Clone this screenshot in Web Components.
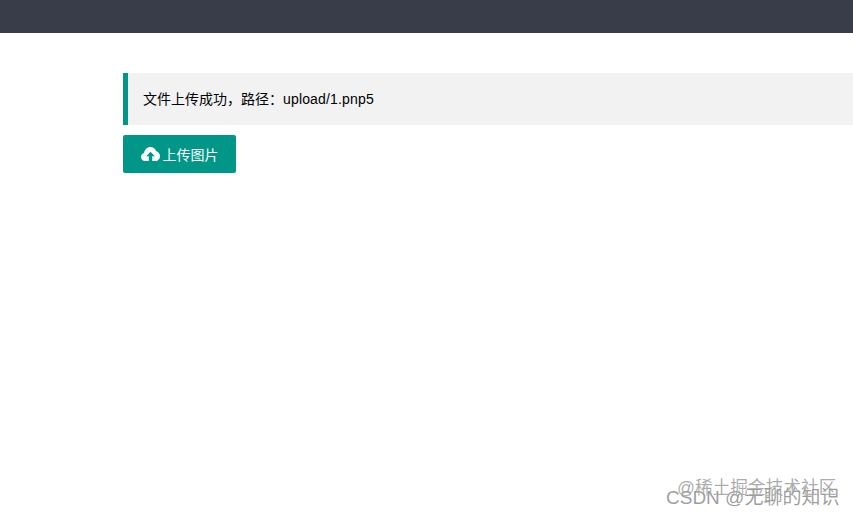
<!DOCTYPE html>
<html lang="zh">
<head>
<meta charset="utf-8">
<title>上传图片</title>
<style>
html,body{margin:0;padding:0;background:#fff;height:100%;overflow:hidden}
body{font:14px "Liberation Sans","Noto Sans CJK SC",sans-serif;color:#000}
</style>
</head>
<body>
<app-shell>
  <top-bar slot="top"></top-bar>
  <quote-box>文件上传成功，路径：<span style="letter-spacing:.16px">upload/1.pnp5</span></quote-box>
  <upload-button>上传图片</upload-button>
  <water-mark slot="overlay"></water-mark>
</app-shell>
<script>
function def(name, html){
  customElements.define(name, class extends HTMLElement{
    constructor(){super();this.attachShadow({mode:'open'}).innerHTML=html;}
  });
}
def('app-shell',`<style>
:host{display:block;position:relative;height:517px;width:853px;overflow:hidden}
main{display:flex;flex-direction:column;align-items:flex-start;gap:10px;padding:40px 0 0 123px}
</style><slot name="top"></slot><main><slot></slot></main><slot name="overlay"></slot>`);
def('top-bar',`<style>:host{display:block;height:33px;background:#393d49}</style>`);
def('quote-box',`<style>
:host{display:block;box-sizing:border-box;width:730px;height:52px;line-height:52px;padding-left:15px;
border-left:5px solid #009688;background:#f2f2f2;font-size:14px;color:#000;white-space:nowrap}
</style><slot></slot>`);
def('upload-button',`<style>
:host{display:inline-flex;align-items:center;justify-content:center;gap:3px;box-sizing:border-box;width:113px;height:38px;
background:#009688;color:#fff;border-radius:2px;font-size:14px;white-space:nowrap}
svg{width:19px;height:14px;display:block;flex:none}
</style><svg viewBox="0 0 19 14" aria-hidden="true"><path fill="#fff" d="M4.2 14C1.9 14 0 12.2 0 9.9c0-2 1.3-3.6 3.1-4C3.6 2.5 6.2 0 9.4 0c2.7 0 5 1.7 5.9 4.2 2.1.4 3.7 2.6 3.7 5 0 2.6-2 4.8-4.6 4.8h-3.2V9.2h2.6L9.5 4.8 5.2 9.2h2.6V14z"/></svg><span><slot></slot></span>`);
def('water-mark',`<style>
:host{display:block;position:absolute;inset:0;pointer-events:none;white-space:nowrap}
div{position:absolute;line-height:20px;text-shadow:0 0 1px #fff}
.a{left:677px;top:478px;font-size:17.7px;color:rgba(135,135,135,.7)}
.b{left:666px;top:488px;font-size:19px;color:rgba(125,125,125,.75)}
</style><div class="a">@稀土掘金技术社区</div><div class="b">CSDN @无聊的知识</div>`);
</script>
</body>
</html>
